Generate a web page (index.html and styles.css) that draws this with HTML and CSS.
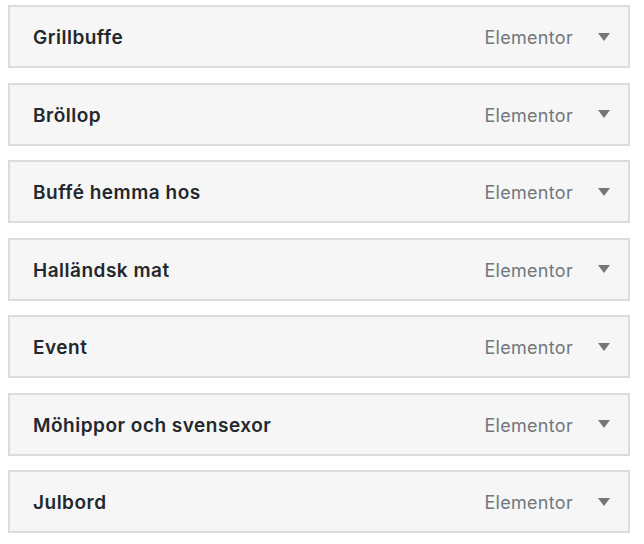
FILE: index.html
```html
<!DOCTYPE html>
<html>
    <head>
        <title>Templates</title>
        <meta charset="utf-8">
        <link rel="stylesheet" href="styles.css">
    </head>
    <body>
        <div id="list">
            <div class="item"><span class="name">Grillbuffe</span><span class="type">Elementor</span><span class="arrow"></span></div>
            <div class="item"><span class="name">Bröllop</span><span class="type">Elementor</span><span class="arrow"></span></div>
            <div class="item"><span class="name">Buffé hemma hos</span><span class="type">Elementor</span><span class="arrow"></span></div>
            <div class="item"><span class="name">Halländsk mat</span><span class="type">Elementor</span><span class="arrow"></span></div>
            <div class="item"><span class="name">Event</span><span class="type">Elementor</span><span class="arrow"></span></div>
            <div class="item"><span class="name">Möhippor och svensexor</span><span class="type">Elementor</span><span class="arrow"></span></div>
            <div class="item"><span class="name">Julbord</span><span class="type">Elementor</span><span class="arrow"></span></div>
        </div>
    </body>
</html>
```

FILE: styles.css
```css
body {margin: 0px; background: #fff; font-family: Inter, "Liberation Sans", sans-serif;}

#list {display: flex; flex-direction: column; gap: 14.5px; padding: 5px 14px 0px 8px;}

.item {display: flex; align-items: center; height: 63px; box-sizing: border-box; border: 2px solid #dcdcde; background: #f5f6f5; padding: 2px 18px 0px 23px;}
.name {flex: 1; font-size: 19px; font-weight: 600; letter-spacing: 0.5px; color: #23282d;}
.type {font-size: 18px; letter-spacing: 0.3px; color: #72777c; margin-right: 25px;}
.arrow {width: 0px; height: 0px; margin-top: -2px; border-left: 6px solid transparent; border-right: 6px solid transparent; border-top: 8px solid #72777c;}
```
